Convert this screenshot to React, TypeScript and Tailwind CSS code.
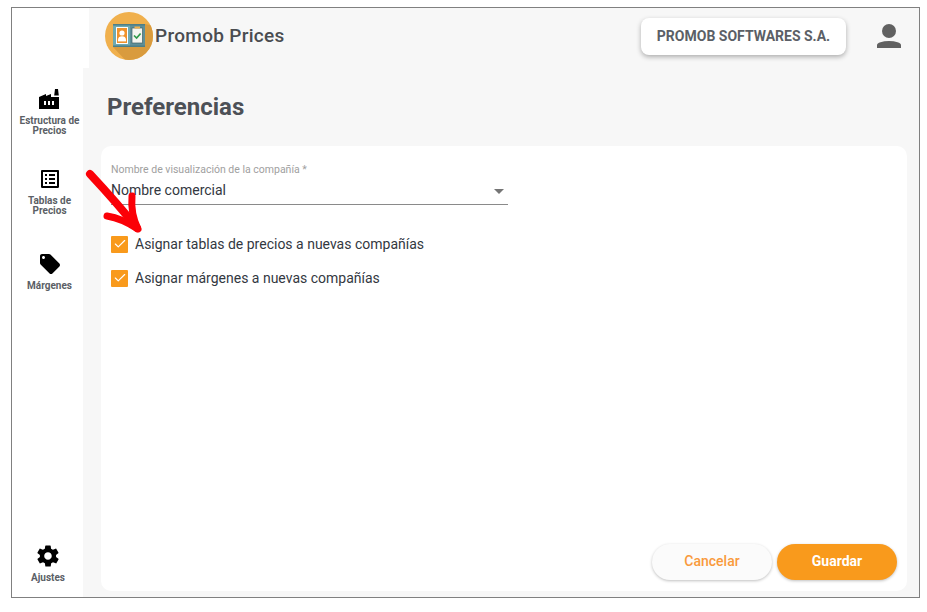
import { Check } from 'lucide-react'
import { IoMdSettings } from 'react-icons/io'
import { MdFactory, MdListAlt, MdLocalOffer } from 'react-icons/md'

const font = { fontFamily: 'Roboto, sans-serif' }

function Logo() {
  return (
    <svg width="48" height="48" viewBox="0 0 48 48" className="shrink-0">
      <defs>
        <clipPath id="disc">
          <circle cx="24" cy="24" r="24" />
        </clipPath>
      </defs>
      <circle cx="24" cy="24" r="24" fill="#f0b04d" />
      <polygon points="40,35 8,35 24,52 50,52 50,14 40,12" fill="#d99b3e" clipPath="url(#disc)" />
      <rect x="8" y="12" width="32" height="23" fill="#6fa9b0" />
      <rect x="25" y="12" width="15" height="23" fill="#5f8f98" />
      <rect x="8" y="12" width="32" height="1.5" fill="#4e7f88" />
      <rect x="8" y="33.5" width="32" height="1.5" fill="#4e7f88" />
      <rect x="11" y="15" width="12" height="17" fill="#ffffff" />
      <rect x="12" y="16" width="10" height="15" fill="#f0922b" />
      <circle cx="17" cy="21" r="2.6" fill="#ffffff" />
      <path d="M13 28c0-2.8 1.8-3.8 4-3.8s4 1 4 3.8z" fill="#ffffff" />
      <rect x="13" y="28" width="8" height="1.4" fill="#ffffff" />
      <rect x="27" y="16" width="10.5" height="15" fill="#f5f5f0" stroke="#3f5f66" strokeWidth="0.7" />
      <rect x="29.5" y="14.5" width="5.5" height="2" fill="#f0b04d" />
      <path d="M29 23.5l2.6 2.6 4-4.6" fill="none" stroke="#2f9a4a" strokeWidth="1.7" />
    </svg>
  )
}

function NavItem({ icon, label, className }: { icon: React.ReactNode; label: React.ReactNode; className?: string }) {
  return (
    <div className={`flex flex-col items-center text-center ${className ?? ''}`}>
      {icon}
      <span className="text-[10px] leading-[10px] font-bold text-[#5b5f66]">{label}</span>
    </div>
  )
}

function Option({ label }: { label: string }) {
  return (
    <div className="flex items-center gap-2 h-[18px]">
      <span className="w-[17px] h-[17px] bg-[#f99a1c] rounded-[1px] flex items-center justify-center">
        <Check className="w-[14px] h-[14px] text-white" strokeWidth={2} />
      </span>
      <span className="text-sm -ml-[1px] text-[#33383f]">{label}</span>
    </div>
  )
}

export default function App() {
  return (
    <div className="w-[927px] h-[612px] bg-white pl-[11px] pt-[7px] overflow-hidden" style={font}>
      <div className="relative w-[909px] h-[591px] border border-[#808080] flex flex-col bg-white">
        {/* top bar */}
        <div className="flex h-[60px] shrink-0">
          <div className="w-[77px] shrink-0 bg-white" />
          <div className="flex-1 bg-[#f7f7f7] flex items-center pl-4 pr-[18px] pb-1">
            <Logo />
            <span className="ml-[2px] text-[19px] font-medium tracking-[0.3px] text-[#4a4c50]">Promob Prices</span>
            <div className="ml-auto w-[205px] h-[37px] bg-white rounded-lg shadow-[0_2px_5px_rgba(0,0,0,0.3)] flex items-center justify-center text-sm font-bold text-[#5b5f66]">
              PROMOB SOFTWARES S.A.
            </div>
            <svg className="ml-[31px]" width="24" height="24" viewBox="0 0 24 24" fill="#616161">
              <circle cx="12" cy="7" r="7" />
              <ellipse cx="12" cy="21" rx="12" ry="4" />
              <rect x="0" y="21" width="24" height="3" />
            </svg>
          </div>
        </div>

        <div className="flex flex-1 min-h-0">
          {/* sidebar */}
          <div className="w-[71px] shrink-0 bg-white flex flex-col items-center pl-1 pt-[19px] pb-[14px]">
            <NavItem icon={<MdFactory className="w-6 h-6 text-black mb-[5px]" />} label={<>Estructura de<br />Precios</>} />
            <NavItem className="mt-[31px]" icon={<MdListAlt className="w-6 h-6 text-black mb-[5px]" />} label={<>Tablas de<br />Precios</>} />
            <NavItem className="mt-[36px]" icon={<MdLocalOffer className="w-6 h-6 text-black mb-[5px]" />} label="Márgenes" />
            <NavItem className="mt-auto mr-[3px]" icon={<IoMdSettings className="w-[26px] h-[26px] text-black mb-[4px]" />} label="Ajustes" />
          </div>

          {/* content */}
          <div className="flex-1 bg-[#f7f7f7] flex flex-col pl-[18px] pr-[12px] pb-[6px]">
            <h1 className="pl-[6px] pt-[23px] text-2xl leading-[32px] font-bold text-[#4d5157] h-[78px] shrink-0">Preferencias</h1>
            <div className="flex-1 bg-white rounded-[10px] flex flex-col pl-[10px] pr-[10px] pt-[18px] pb-[11px]">
              <div className="w-[397px] border-b border-[#8a8a8a] h-[41px]">
                <div className="text-[10.5px] leading-[12px] text-[#a0a0a0]">Nombre de visualización de la compañía *</div>
                <div className="flex items-center justify-between pr-[4px] mt-[4px]">
                  <span className="text-sm leading-[20px] text-[#33383f]">Nombre comercial</span>
                  <span className="w-0 h-0 mt-[2px] border-l-[5px] border-r-[5px] border-t-[5px] border-l-transparent border-r-transparent border-t-[#757575]" />
                </div>
              </div>
              <div className="mt-[30px] flex flex-col gap-4">
                <Option label="Asignar tablas de precios a nuevas compañías" />
                <Option label="Asignar márgenes a nuevas compañías" />
              </div>
              <div className="mt-auto flex justify-end gap-[5px]">
                <button className="w-[120px] h-9 pb-[2px] rounded-full bg-[#fbfbfb] shadow-[0_1px_3px_rgba(0,0,0,0.25)] text-sm font-medium text-[#f99a3c]">Cancelar</button>
                <button className="w-[120px] h-9 pb-[2px] rounded-full bg-[#f99a1c] shadow-[0_1px_3px_rgba(0,0,0,0.25)] text-sm font-bold text-white">Guardar</button>
              </div>
            </div>
          </div>
        </div>

        {/* red annotation arrow */}
        <svg className="absolute left-[70px] top-[155px]" width="70" height="80" viewBox="0 0 70 80">
          <path d="M8 11 C22 26 40 46 55 65" stroke="#fb0007" strokeWidth="8" strokeLinecap="round" fill="none" />
          <path d="M50 33 C49 45 51 56 56 66 C47 60 37 55 25 53" stroke="#fb0007" strokeWidth="7" strokeLinecap="round" strokeLinejoin="round" fill="none" />
        </svg>
      </div>
    </div>
  )
}
